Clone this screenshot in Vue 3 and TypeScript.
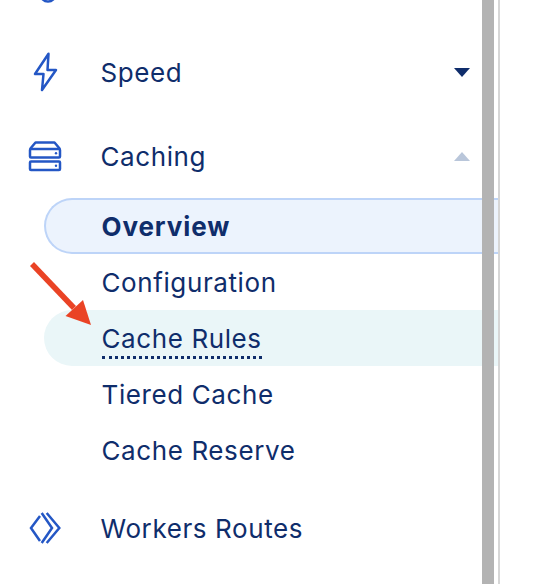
<script setup lang="ts">
const subItems = [
  { label: 'Overview', cls: 'current' },
  { label: 'Configuration', cls: '' },
  { label: 'Cache Rules', cls: 'hovered' },
  { label: 'Tiered Cache', cls: '' },
  { label: 'Cache Reserve', cls: '' },
];
</script>

<template>
  <div class="sidebar">
    <nav class="nav">
      <div class="row">
        <span class="icon">
          <svg width="36" height="36" viewBox="0 0 36 36" fill="none">
            <circle cx="21" cy="24" r="7.5" stroke="#2457c5" stroke-width="2.5" />
          </svg>
        </span>
      </div>

      <div class="row">
        <span class="icon">
          <svg width="36" height="40" viewBox="0 0 36 40" fill="none">
            <path d="M21.5 1.8 L8 22 H16.5 L15 38 L29 18 H20.5 Z" stroke="#2457c5" stroke-width="2.5" stroke-linejoin="round" />
          </svg>
        </span>
        <span class="label">Speed</span>
        <span class="caret down"></span>
      </div>

      <div class="row">
        <span class="icon">
          <svg width="36" height="32" viewBox="0 0 36 32" fill="none">
            <path d="M3 9 L8.5 2.5 H27.5 L33 9" stroke="#2457c5" stroke-width="2.5" stroke-linejoin="round" />
            <rect x="3" y="9" width="30" height="8.5" rx="1" stroke="#2457c5" stroke-width="2.5" />
            <rect x="3" y="21.5" width="30" height="8.5" rx="1" stroke="#2457c5" stroke-width="2.5" />
            <circle cx="29" cy="13.2" r="1.2" fill="#2457c5" />
            <circle cx="29" cy="25.7" r="1.2" fill="#2457c5" />
          </svg>
        </span>
        <span class="label">Caching</span>
        <span class="caret up"></span>
      </div>

      <ul class="sub">
        <li v-for="item in subItems" :key="item.label" :class="['sub-item', item.cls]">
          <span class="sub-label">{{ item.label }}</span>
        </li>
      </ul>

      <div class="row">
        <span class="icon">
          <svg width="36" height="32" viewBox="0 0 36 32" fill="none">
            <path d="M13 4 L4 16 L13 29" stroke="#2457c5" stroke-width="2.5" />
            <path d="M14.7 1 L25 16 L14.7 31" stroke="#2457c5" stroke-width="2.5" />
            <path d="M19.7 1 L32.3 16 L19.7 31" stroke="#2457c5" stroke-width="2.5" />
          </svg>
        </span>
        <span class="label">Workers Routes</span>
      </div>
    </nav>

    <div class="scrollbar"></div>

    <svg class="arrow" width="64" height="72" viewBox="0 0 64 72" fill="none">
      <path d="M2 3 L44 47" stroke="#ea4325" stroke-width="5.5" />
      <path d="M61 64 L35.5 55 L53 39 Z" fill="#ea4325" />
    </svg>
  </div>
</template>

<style scoped>
.sidebar {
  position: relative;
  width: 500px;
  height: 584px;
  box-sizing: border-box;
  border-right: 2px solid #d6d6d6;
  overflow: hidden;
  font-family: Inter, "Liberation Sans", sans-serif;
  color: #0f2d6b;
}

.nav {
  margin-top: -54px;
}

.row {
  display: flex;
  align-items: center;
  height: 84px;
  padding-left: 27px;
  padding-right: 28px;
}

.icon {
  display: flex;
  align-items: center;
  justify-content: center;
  width: 36px;
  margin-right: 37.5px;
}

.label {
  flex: 1;
  font-size: 26px;
  letter-spacing: 0.6px;
}

.caret {
  width: 0;
  height: 0;
  border-left: 8px solid transparent;
  border-right: 8px solid transparent;
}

.caret.down {
  border-top: 9px solid #0f2d6b;
}

.caret.up {
  border-bottom: 9px solid #b9c6da;
}

.sub {
  list-style: none;
  margin: 0 0 8px 44px;
  padding: 0;
}

.sub-item {
  display: flex;
  align-items: center;
  height: 56px;
  box-sizing: border-box;
  padding-left: 57.5px;
  border-radius: 28px 0 0 28px;
  font-size: 26px;
  letter-spacing: 0.6px;
}

.sub-item.current {
  background: #ecf3fd;
  border: 2px solid #bdd4f8;
  border-right: 0;
  padding-left: 55.5px;
  font-weight: 700;
  letter-spacing: 0.9px;
}

.sub-item.hovered {
  background: #eaf6f8;
}

.sub-item.hovered .sub-label {
  border-bottom: 3px dotted #0f2d6b;
  padding-bottom: 2px;
  margin-top: 5px;
}

.scrollbar {
  position: absolute;
  top: 0;
  left: 482px;
  width: 12px;
  height: 100%;
  background: #b3b3b3;
}

.arrow {
  position: absolute;
  left: 30px;
  top: 261px;
}
</style>
